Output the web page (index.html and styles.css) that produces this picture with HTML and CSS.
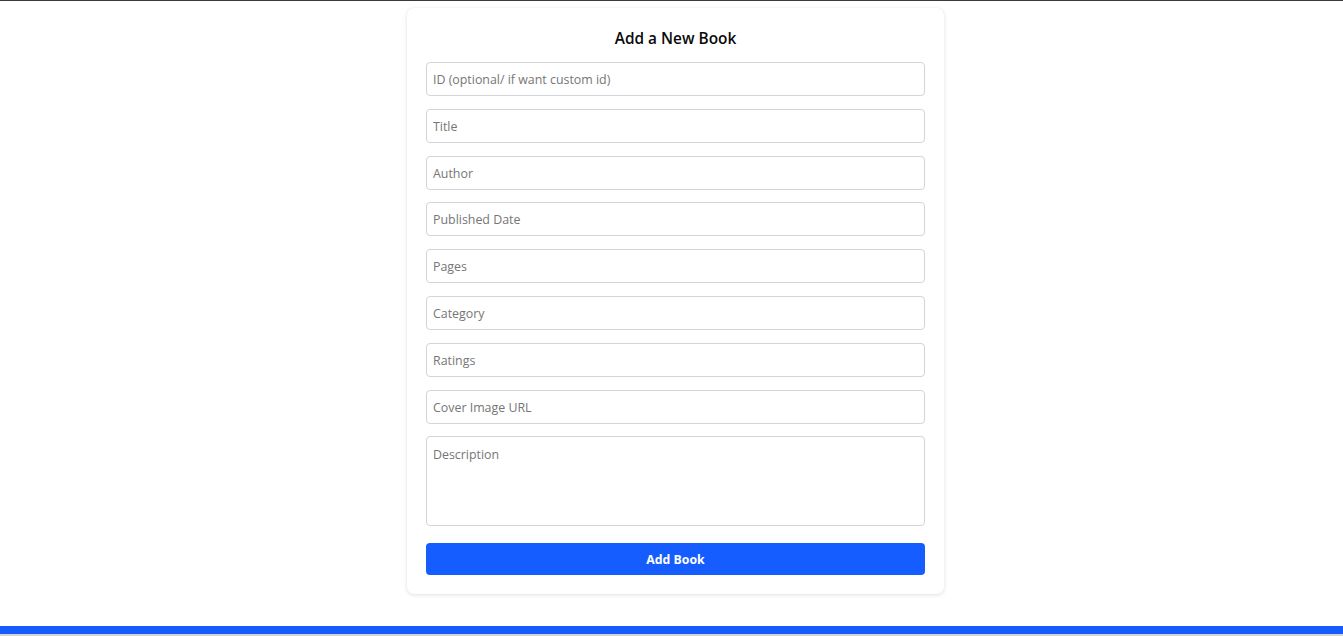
FILE: index.html
```html
<!DOCTYPE html>
<html>
<head>
<meta charset="utf-8">
<link rel="stylesheet" href="styles.css">
</head>
<body>
<div class="topline"></div>
<div class="wrap">
  <form class="card">
    <h2 class="title">Add a New Book</h2>
    <input class="field" placeholder="ID (optional/ if want custom id)">
    <input class="field" placeholder="Title">
    <input class="field" placeholder="Author">
    <input class="field" placeholder="Published Date">
    <input class="field" placeholder="Pages">
    <input class="field" placeholder="Category">
    <input class="field" placeholder="Ratings">
    <input class="field" placeholder="Cover Image URL">
    <textarea class="field area" placeholder="Description"></textarea>
    <button type="button" class="btn">Add Book</button>
  </form>
</div>
<div class="bar"></div>
</body>
</html>
```
FILE: styles.css
```css
html, body { margin: 0; padding: 0; background: #fff; }
body { font-family: "Open Sans", "Noto Sans", sans-serif; height: 636px; overflow: hidden; }
.topline { height: 1px; background: #3a3a3a; }
.wrap { display: flex; justify-content: center; padding: 7px 0 0 8px; }
.card {
  width: 537px; box-sizing: border-box; padding: 19px 19px 19px;
  background: #fff; border-radius: 7px;
  box-shadow: 0 1px 4px rgba(0,0,0,0.12), 0 0 1px rgba(0,0,0,0.06);
  display: flex; flex-direction: column; gap: 12.8px;
}
.title { margin: 0 0 -1.8px; font-size: 15.4px; font-weight: 600; line-height: 24px; text-align: center; color: #0a0a0a; }
.field {
  height: 34px; box-sizing: border-box; border: 1px solid #d1d5db; border-radius: 4px;
  padding: 1px 6px 0; font-family: inherit; font-size: 12.4px; color: #333; outline: none; margin: 0;
}
.field::placeholder { color: #767676; }
.area { height: 90px; padding-top: 9px; resize: none; line-height: 18px; }
.btn {
  height: 32px; margin-top: 4px; border: none; border-radius: 4px; background: #165dff; color: #fff;
  font-family: inherit; font-weight: 700; font-size: 12.3px;
}
.bar { margin-top: 32px; height: 8px; background: #165dff; border-bottom: 2px solid #d4d4d4; }
```
